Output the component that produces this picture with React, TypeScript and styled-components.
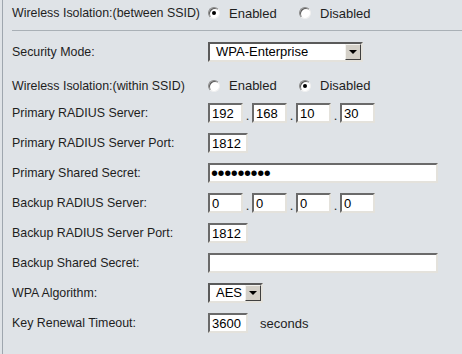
import styled, { createGlobalStyle } from "styled-components";

const GlobalStyle = createGlobalStyle`
    html, body {
        margin: 0;
        padding: 0;
        background-color: #dfe3e7;
    }
    body {
        font-family: "Liberation Sans", Arial, sans-serif;
        font-size: 13px;
        color: #1e1e1e;
    }
`;

const StyledPage = styled.div`
    width: 460px;
    height: 354px;
    margin-left: 2px;
    border-left: 1px solid #9ea6ae;
    background-color: #dfe3e7;
    box-sizing: border-box;
    overflow: hidden;
`;

// Rows

const StyledRow = styled.div<{ h?: number }>`
    display: flex;
    align-items: center;
    height: ${({ h }) => (h ? `${h}px` : "30px")};
    padding-left: 9px;
    box-sizing: border-box;
`;

const StyledLabel = styled.div`
    width: 196px;
    flex-shrink: 0;
    white-space: nowrap;
    font-size: 12.4px;
`;

const StyledField = styled.div`
    display: flex;
    align-items: center;
`;

const StyledDivider = styled.div`
    height: 1px;
    margin: 4px 0px 0px 9px;
    background-color: #a9b0b6;
`;

// Inputs

const StyledInput = styled.input<{ w?: number }>`
    width: ${({ w }) => (w ? `${w}px` : "40px")};
    height: 20px;
    box-sizing: border-box;
    margin: 0;
    padding: 1px 2px 0px 2px;
    font-family: "Liberation Sans", Arial, sans-serif;
    font-size: 13px;
    color: #000;
    background-color: #fff;
    border-style: solid;
    border-width: 2px;
    border-color: #6a6a6a #e4e2dc #e4e2dc #6a6a6a;
    outline: none;
`;

const StyledSecret = styled(StyledInput)`
    font-size: 20px;
    line-height: 16px;
    padding: 0px 1px;
    letter-spacing: -0.4px;
`;

const StyledDot = styled.span`
    width: 9px;
    text-align: center;
    padding-top: 4px;
`;

const StyledUnit = styled.span`
    margin-left: 12px;
`;

// Select

const StyledSelect = styled.div<{ w?: number }>`
    width: ${({ w }) => (w ? `${w}px` : "100px")};
    height: 20px;
    box-sizing: border-box;
    display: flex;
    align-items: stretch;
    background-color: #fff;
    border-style: solid;
    border-width: 2px;
    border-color: #5a5a5a #e4e2dc #e4e2dc #5a5a5a;
`;

const StyledSelectValue = styled.span`
    flex: 1;
    padding-left: 6px;
    line-height: 16px;
    color: #000;
    white-space: nowrap;
`;

const StyledArrow = styled.span`
    width: 16px;
    box-sizing: border-box;
    background-color: #d4d0c8;
    border-style: solid;
    border-width: 1px;
    border-color: #f4f3ef #404040 #404040 #f4f3ef;
    display: flex;
    align-items: center;
    justify-content: center;

    &::after {
        content: "";
        width: 0;
        height: 0;
        border-left: 4px solid transparent;
        border-right: 4px solid transparent;
        border-top: 4px solid #000;
    }
`;

// Radio

const StyledOption = styled.label<{ w?: number }>`
    display: flex;
    align-items: center;
    width: ${({ w }) => (w ? `${w}px` : "auto")};
    cursor: pointer;
`;

const StyledRadio = styled.span<{ checked?: boolean }>`
    width: 12px;
    height: 12px;
    box-sizing: border-box;
    margin-right: 9px;
    border-radius: 50%;
    background-color: #fff;
    border: 1px solid;
    border-color: #8a8a8a #f0f0f0 #f0f0f0 #8a8a8a;
    box-shadow: inset 1px 1px 0px #5a5a5a;
    display: flex;
    align-items: center;
    justify-content: center;

    &::after {
        content: "";
        width: 4px;
        height: 4px;
        border-radius: 50%;
        background-color: ${({ checked }) => (checked ? "#000" : "transparent")};
    }
`;

const RadioPair = ({ value }: { value: "on" | "off" }) => (
    <StyledField>
        <StyledOption w={91}>
            <StyledRadio checked={value === "on"} />
            Enabled
        </StyledOption>
        <StyledOption>
            <StyledRadio checked={value === "off"} />
            Disabled
        </StyledOption>
    </StyledField>
);

const IpField = ({ parts }: { parts: string[] }) => (
    <StyledField>
        {parts.map((p, i) => (
            <StyledField key={i}>
                {i > 0 && <StyledDot>.</StyledDot>}
                <StyledInput w={35} defaultValue={p} />
            </StyledField>
        ))}
    </StyledField>
);

const App = () => {
    return (
        <>
            <GlobalStyle />
            <StyledPage>
                <StyledRow h={26}>
                    <StyledLabel>Wireless Isolation:(between SSID)</StyledLabel>
                    <RadioPair value="on" />
                </StyledRow>

                <StyledDivider />

                <StyledRow h={42}>
                    <StyledLabel>Security Mode:</StyledLabel>
                    <StyledSelect w={155}>
                        <StyledSelectValue>WPA-Enterprise</StyledSelectValue>
                        <StyledArrow />
                    </StyledSelect>
                </StyledRow>

                <StyledRow h={25}>
                    <StyledLabel>Wireless Isolation:(within SSID)</StyledLabel>
                    <RadioPair value="off" />
                </StyledRow>

                <StyledRow>
                    <StyledLabel>Primary RADIUS Server:</StyledLabel>
                    <IpField parts={["192", "168", "10", "30"]} />
                </StyledRow>

                <StyledRow>
                    <StyledLabel>Primary RADIUS Server Port:</StyledLabel>
                    <StyledInput w={40} defaultValue="1812" />
                </StyledRow>

                <StyledRow>
                    <StyledLabel>Primary Shared Secret:</StyledLabel>
                    <StyledSecret w={230} type="password" defaultValue="secret123" />
                </StyledRow>

                <StyledRow>
                    <StyledLabel>Backup RADIUS Server:</StyledLabel>
                    <IpField parts={["0", "0", "0", "0"]} />
                </StyledRow>

                <StyledRow>
                    <StyledLabel>Backup RADIUS Server Port:</StyledLabel>
                    <StyledInput w={40} defaultValue="1812" />
                </StyledRow>

                <StyledRow>
                    <StyledLabel>Backup Shared Secret:</StyledLabel>
                    <StyledSecret w={230} type="password" defaultValue="" />
                </StyledRow>

                <StyledRow>
                    <StyledLabel>WPA Algorithm:</StyledLabel>
                    <StyledSelect w={55}>
                        <StyledSelectValue>AES</StyledSelectValue>
                        <StyledArrow />
                    </StyledSelect>
                </StyledRow>

                <StyledRow>
                    <StyledLabel>Key Renewal Timeout:</StyledLabel>
                    <StyledInput w={40} defaultValue="3600" />
                    <StyledUnit>seconds</StyledUnit>
                </StyledRow>
            </StyledPage>
        </>
    );
};

export default App;
